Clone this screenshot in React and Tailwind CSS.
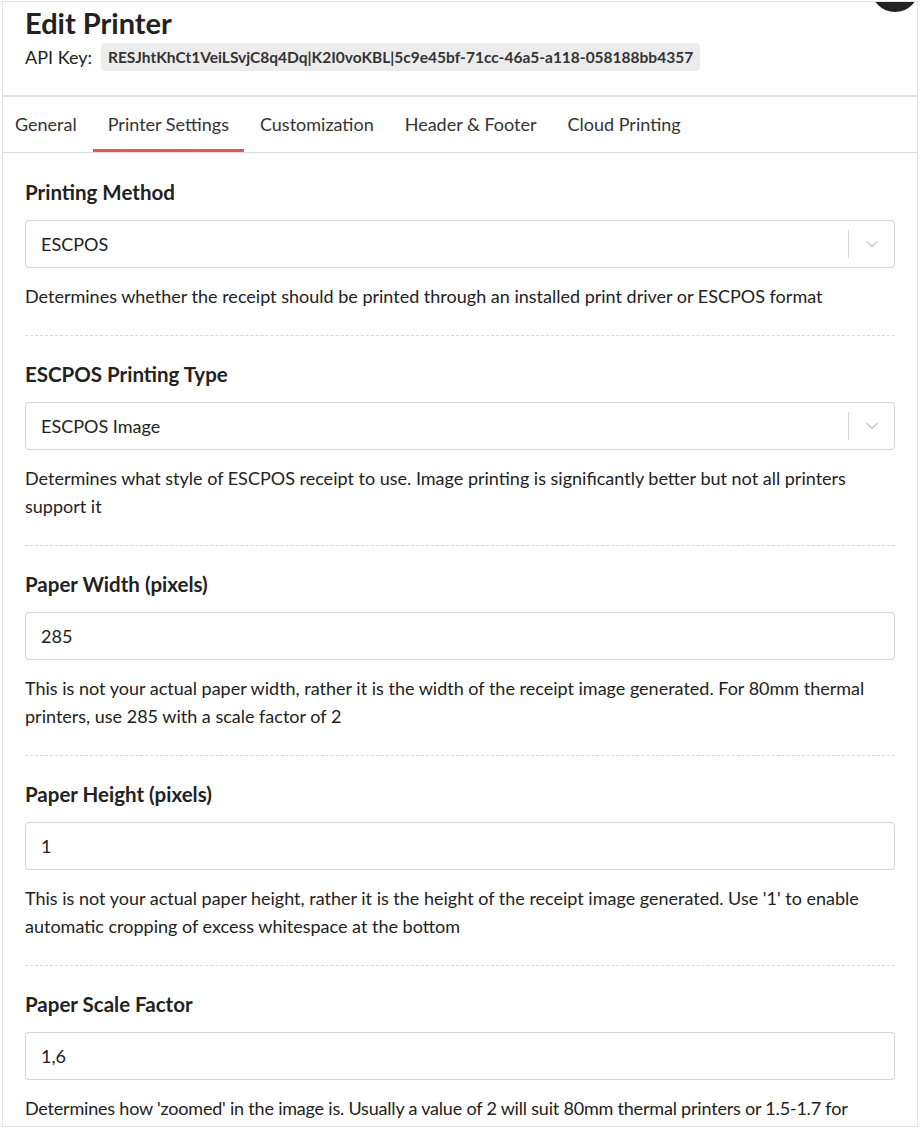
import { ChevronDown } from 'lucide-react';

const TABS = ['General', 'Printer Settings', 'Customization', 'Header & Footer', 'Cloud Printing'];

const SECTIONS = [
  {
    label: 'Printing Method',
    kind: 'select',
    value: 'ESCPOS',
    help: 'Determines whether the receipt should be printed through an installed print driver or ESCPOS format',
  },
  {
    label: 'ESCPOS Printing Type',
    kind: 'select',
    value: 'ESCPOS Image',
    help: 'Determines what style of ESCPOS receipt to use. Image printing is significantly better but not all printers support it',
  },
  {
    label: 'Paper Width (pixels)',
    kind: 'input',
    value: '285',
    help: 'This is not your actual paper width, rather it is the width of the receipt image generated. For 80mm thermal printers, use 285 with a scale factor of 2',
  },
  {
    label: 'Paper Height (pixels)',
    kind: 'input',
    value: '1',
    help: "This is not your actual paper height, rather it is the height of the receipt image generated. Use '1' to enable automatic cropping of excess whitespace at the bottom",
  },
  {
    label: 'Paper Scale Factor',
    kind: 'input',
    value: '1,6',
    help: (
      <span className="whitespace-nowrap tracking-[-0.2px]">
        Determines how 'zoomed' in the image is. Usually a value of 2 will suit 80mm thermal printers or 1.5-1.7 for
      </span>
    ),
  },
];

function SelectBox({ value }) {
  return (
    <div className="flex h-12 items-center rounded border border-[#d4d4d4] bg-white">
      <span className="flex-1 pl-[15px] text-[18px] text-[#222]">{value}</span>
      <span className="h-7 w-px bg-[#d8d8d8]" />
      <span className="flex w-[45px] justify-center text-[#c8c8c8]">
        <ChevronDown size={20} strokeWidth={1.6} />
      </span>
    </div>
  );
}

function TextBox({ value }) {
  return (
    <input
      readOnly
      value={value}
      className="block h-12 w-full rounded border border-[#d4d4d4] bg-white pl-[15px] text-[18px] text-[#222] outline-none"
      style={{ fontFamily: 'inherit' }}
    />
  );
}

export default function App() {
  return (
    <div className="bg-white pt-px pl-[2px] pr-[2px]" style={{ fontFamily: 'Lato, "Open Sans", sans-serif' }}>
      <div className="relative h-[1126px] overflow-hidden border border-[#e3e3e3] bg-white">
        <span className="absolute -right-[2px] -top-[38px] h-12 w-12 rounded-full bg-[#222]" />

        <div className="border-b-2 border-[#e2e2e2] px-[22px] pt-[4px] pb-[24px]">
          <h1 className="text-[29px] font-bold leading-[34px] text-[#222]">Edit Printer</h1>
          <div className="mt-[3px] flex items-center gap-[9px] text-[18px] text-[#222]">
            <span>API Key:</span>
            <code
              className="rounded bg-[#ececec] px-[7px] text-[15.5px] font-bold leading-[28px] text-[#333]"
              style={{ fontFamily: 'inherit' }}
            >
              RESJhtKhCt1VeiLSvjC8q4Dq|K2I0voKBL|5c9e45bf-71cc-46a5-a118-058188bb4357
            </code>
          </div>
        </div>

        <div className="-ml-[3px] flex gap-px border-b border-[#dcdcdc]">
          {TABS.map((tab) => (
            <div
              key={tab}
              className={
                'flex h-[55px] items-center border-b-[3px] px-[15px] pt-[3px] text-[18px] text-[#333] ' +
                (tab === 'Printer Settings' ? 'border-[#e0575e]' : 'border-transparent')
              }
            >
              {tab}
            </div>
          ))}
        </div>

        <div className="px-[22px]">
          {SECTIONS.map((s, i) => (
            <div
              key={s.label}
              className={
                'border-b border-dashed border-[#d9d9d9] pb-[25px] ' + (i === 0 ? 'pt-[27px]' : 'pt-[26px]')
              }
            >
              <h2 className="mb-[16px] text-[20.5px] font-bold leading-6 text-[#222]">{s.label}</h2>
              {s.kind === 'select' ? <SelectBox value={s.value} /> : <TextBox value={s.value} />}
              <p className="mt-[14px] text-[18px] leading-7 text-[#222]">{s.help}</p>
            </div>
          ))}
        </div>
      </div>
    </div>
  );
}
